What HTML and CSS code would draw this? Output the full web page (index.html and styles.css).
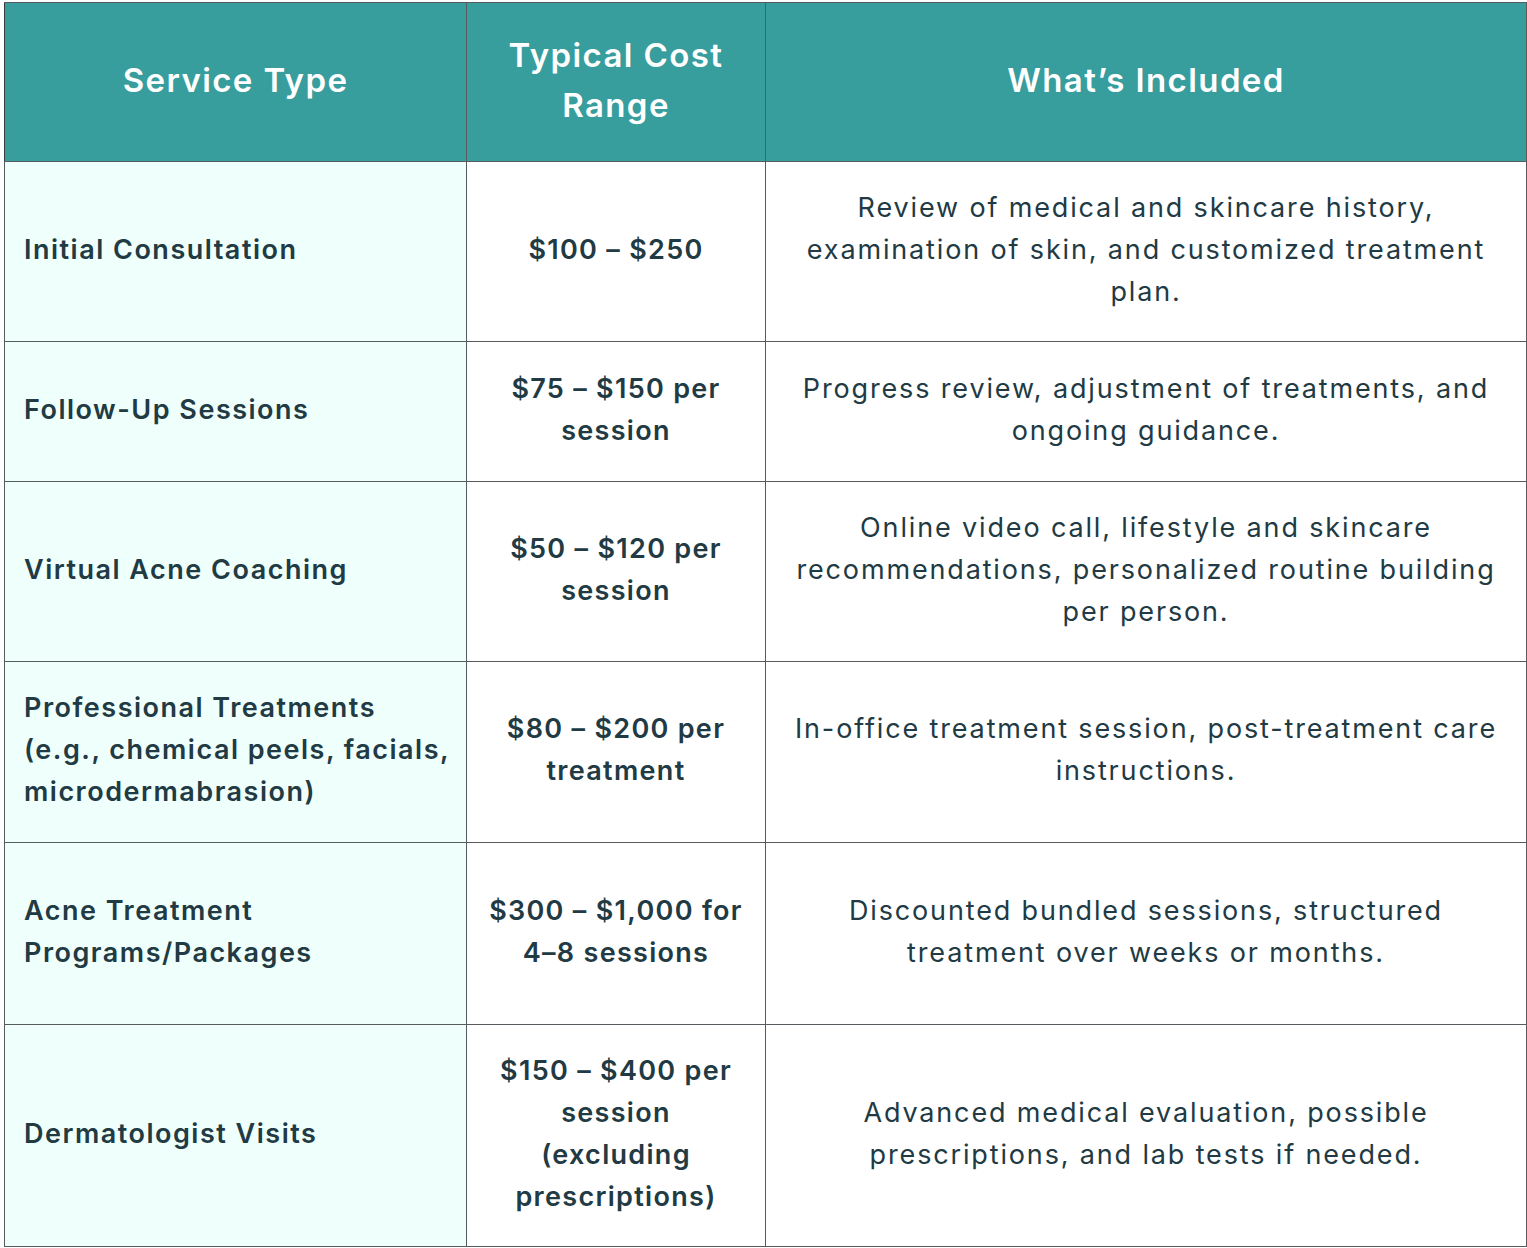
FILE: index.html
```html
<!DOCTYPE html>
<html>
<head>
<meta charset="utf-8">
<link rel="stylesheet" href="styles.css">
</head>
<body>
<div class="wrap">
<table class="costs">
  <colgroup>
    <col class="c1"><col class="c2"><col class="c3">
  </colgroup>
  <thead>
    <tr class="h">
      <th>Service Type</th>
      <th class="mid">Typical Cost<br>Range</th>
      <th>What’s Included</th>
    </tr>
  </thead>
  <tbody>
    <tr class="r1">
      <td class="svc">Initial Consultation</td>
      <td class="cost">$100 – $250</td>
      <td class="inc">Review of medical and skincare history,<br>examination of skin, and customized treatment<br>plan.</td>
    </tr>
    <tr class="r2">
      <td class="svc">Follow-Up Sessions</td>
      <td class="cost">$75 – $150 per<br>session</td>
      <td class="inc">Progress review, adjustment of treatments, and<br>ongoing guidance.</td>
    </tr>
    <tr class="r3">
      <td class="svc">Virtual Acne Coaching</td>
      <td class="cost">$50 – $120 per<br>session</td>
      <td class="inc">Online video call, lifestyle and skincare<br>recommendations, personalized routine building<br>per person.</td>
    </tr>
    <tr class="r4">
      <td class="svc">Professional Treatments<br>(e.g., chemical peels, facials,<br>microdermabrasion)</td>
      <td class="cost">$80 – $200 per<br>treatment</td>
      <td class="inc">In-office treatment session, post-treatment care<br>instructions.</td>
    </tr>
    <tr class="r5">
      <td class="svc">Acne Treatment<br>Programs/Packages</td>
      <td class="cost">$300 – $1,000 for<br>4–8 sessions</td>
      <td class="inc">Discounted bundled sessions, structured<br>treatment over weeks or months.</td>
    </tr>
    <tr class="r6">
      <td class="svc">Dermatologist Visits</td>
      <td class="cost">$150 – $400 per<br>session<br>(excluding<br>prescriptions)</td>
      <td class="inc">Advanced medical evaluation, possible<br>prescriptions, and lab tests if needed.</td>
    </tr>
  </tbody>
</table>
</div>
</body>
</html>
```
FILE: styles.css
```css
html, body {
  margin: 0;
  padding: 0;
  background: #ffffff;
}
.wrap {
  padding: 2px 1px 0 4px;
}
.costs {
  width: 1522px;
  border-collapse: collapse;
  table-layout: fixed;
  font-family: Inter, "Noto Sans", sans-serif;
  color: #213a43;
  font-size: 27px;
  line-height: 42px;
  letter-spacing: 1.5px;
}
.c1 { width: 462px; }
.c2 { width: 299px; }
.c3 { width: 761px; }
.costs th, .costs td {
  border: 1px solid #555b5e;
  vertical-align: middle;
  white-space: nowrap;
}
.costs th {
  background: #379d9d;
  color: #ffffff;
  font-size: 33px;
  font-weight: 600;
  line-height: 50px;
  letter-spacing: 1.4px;
  text-align: center;
  padding: 0 4px 4px;
}
.costs th:first-child { border-left-color: #3a3a3a; }
.h { height: 159px; }
.r1 { height: 180px; }
.r2 { height: 140px; }
.r3 { height: 180px; }
.r4 { height: 181px; }
.r5 { height: 182px; }
.r6 { height: 222px; }
.svc {
  background: #effffb;
  font-weight: 600;
  text-align: left;
  padding: 0 10px 4px 19px;
}
.cost {
  font-weight: 600;
  text-align: center;
  letter-spacing: 1.3px;
  padding: 0 4px 4px;
}
.inc {
  font-weight: 400;
  text-align: center;
  letter-spacing: 1.85px;
  padding: 0 4px 4px;
}
```
